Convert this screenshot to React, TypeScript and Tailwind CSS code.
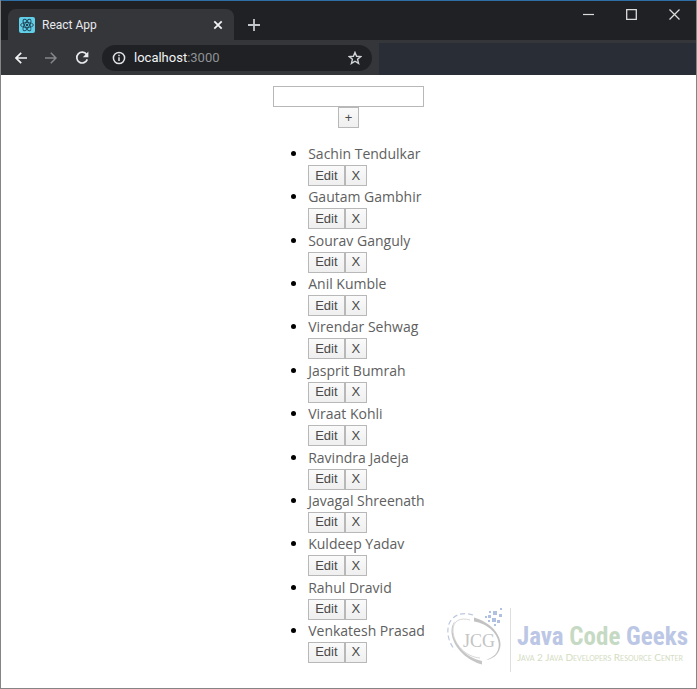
import { useState } from "react";

const initialPlayers = [
  "Sachin Tendulkar",
  "Gautam Gambhir",
  "Sourav Ganguly",
  "Anil Kumble",
  "Virendar Sehwag",
  "Jasprit Bumrah",
  "Viraat Kohli",
  "Ravindra Jadeja",
  "Javagal Shreenath",
  "Kuldeep Yadav",
  "Rahul Dravid",
  "Venkatesh Prasad",
];

const buttonClass =
  "h-[21px] border border-[#b8b8b8] bg-linear-to-b from-[#fafafa] to-[#efefef] px-1.5 font-['Liberation_Sans',sans-serif] text-[13px] leading-4 text-[#4a4a4a]";

const ReactIcon = () => (
  <svg viewBox="0 0 16 16" className="size-4 shrink-0" fill="none">
    <rect width="16" height="16" rx="2" fill="#61cfe8" />
    <g stroke="#20465a" strokeWidth="0.9">
      <ellipse cx="8" cy="8" rx="6.4" ry="2.5" />
      <ellipse cx="8" cy="8" rx="6.4" ry="2.5" transform="rotate(60 8 8)" />
      <ellipse cx="8" cy="8" rx="6.4" ry="2.5" transform="rotate(120 8 8)" />
    </g>
    <circle cx="8" cy="8" r="1.3" fill="#20465a" />
  </svg>
);

const TabStrip = () => (
  <div className="flex h-10 border-t border-[#2f6fa6] bg-[#202124] pl-[7px]">
    <div className="mt-2 flex w-[226px] items-center rounded-t-lg bg-[#35363a] pr-[11px] pl-[11px]">
      <ReactIcon />
      <span className="ml-[7px] flex-1 font-['Roboto',sans-serif] text-xs text-[#e8eaed]">React App</span>
      <button aria-label="Close tab">
        <svg viewBox="0 0 10 10" className="size-[10px]" stroke="#f1f3f4" strokeWidth="1.8">
          <path d="M1.3 1.3l7.4 7.4M8.7 1.3L1.3 8.7" />
        </svg>
      </button>
    </div>
    <button aria-label="New tab" className="mt-2 ml-[14px]">
      <svg viewBox="0 0 12 12" className="size-3" stroke="#c4c7cb" strokeWidth="1.8">
        <path d="M6 0v12M0 6h12" />
      </svg>
    </button>
    <div className="ml-auto flex items-start gap-8 pt-2 pr-4">
      <button aria-label="Minimize">
        <svg viewBox="0 0 11 11" className="size-[11px]" stroke="#dcdcdc" strokeWidth="1.2">
          <path d="M0 5.5h11" />
        </svg>
      </button>
      <button aria-label="Maximize">
        <svg viewBox="0 0 11 11" className="size-[11px]" fill="none" stroke="#dcdcdc" strokeWidth="1.3">
          <path d="M.7 .7h9.6v9.6H.7z" />
        </svg>
      </button>
      <button aria-label="Close">
        <svg viewBox="0 0 11 11" className="size-[11px]" stroke="#dcdcdc" strokeWidth="1.3">
          <path d="M.5 .5l10 10M10.5 .5l-10 10" />
        </svg>
      </button>
    </div>
  </div>
);

const Toolbar = () => (
  <div className="flex h-[35px] items-center bg-[#35363a] pl-[14px]">
    <div className="flex gap-[18px]">
      <button aria-label="Back">
        <svg viewBox="0 0 12 12" className="size-3" fill="none" stroke="#f1f3f4" strokeWidth="1.7">
          <path d="M12 6H1.2M6.2 .8L1 6l5.2 5.2" />
        </svg>
      </button>
      <button aria-label="Forward">
        <svg viewBox="0 0 12 12" className="size-3" fill="none" stroke="#85878b" strokeWidth="1.5">
          <path d="M0 6h10.8M5.8 .8L11 6l-5.2 5.2" />
        </svg>
      </button>
      <button aria-label="Reload">
        <svg viewBox="0 0 14 14" className="size-[14px]" fill="none" stroke="#e8eaed" strokeWidth="1.7">
          <path d="M11.6 3.4A5.4 5.4 0 1 0 12.3 8.4" />
          <path d="M13.4 .6v5.6H7.8z" fill="#e8eaed" stroke="none" />
        </svg>
      </button>
    </div>
    <div className="ml-[13px] flex h-[26px] w-[270px] items-center rounded-full bg-[#202124] px-[10px]">
      <svg viewBox="0 0 14 14" className="size-[14px]" fill="none" stroke="#e0e2e5" strokeWidth="1.5">
        <circle cx="7" cy="7" r="5.6" />
        <path d="M7 6.3v3.8M7 3.8v1.5" />
      </svg>
      <span className="ml-2 flex-1 font-['Roboto',sans-serif] text-[13px] text-[#f1f3f4]">
        localhost<span className="text-[#8f9296]">:3000</span>
      </span>
      <button aria-label="Bookmark this page">
        <svg viewBox="0 0 14 14" className="size-[14px]" fill="none" stroke="#d0d3d7" strokeWidth="1.4">
          <path d="M7 1.4l1.6 3.9 4.2.3-3.2 2.7 1 4.1L7 10.2l-3.6 2.2 1-4.1-3.2-2.7 4.2-.3z" />
        </svg>
      </button>
    </div>
    <div className="mt-[3px] ml-[7px] flex-1 self-stretch bg-[#292d36]" />
  </div>
);

const Watermark = () => (
  <div className="pointer-events-none absolute right-2 bottom-[15px] flex items-center">
    <svg viewBox="0 0 60 66" className="h-[66px] w-[60px]" fill="none">
      <path d="M24 13C14 10 7 14 7 23C7 37 20 50 34 51" stroke="#d2d2d2" strokeWidth="0.9" />
      <path d="M28 10.500C44 15 55 27 54.500 38C54 46 48 52 40 53C48 50 52.500 46 52.800 38C53 28 43 17 28 14.500z" fill="#c2c2c2" />
      <path d="M9 14C2 22 6 36 16 46C22 52 29 55.500 36 57.500L36 54C29 52.500 22 49 17 44C7 34 4 23 9 14z" fill="#c6c6c6" />
      <path d="M27 8C15 4 6 9 3 17C0 26 3 36 9 43" stroke="#bdc8df" strokeWidth="1.2" strokeDasharray="5 3" />
      <text x="17" y="40" fontFamily="Liberation Serif, serif" fontSize="18" fill="#c4c4c4">
        JCG
      </text>
      <g fill="#afc0e0">
        <path d="M47 4h4v4h-4zM53 7h3v3h-3zM42 8h3v3h-3zM46 11h4v4h-4zM51 13h3v3h-3zM48 17h2v2h-2zM54 1h2v2h-2zM43 4h2v2h-2zM39 9h2v2h-2zM42 13h2v2h-2z" />
      </g>
    </svg>
    <div className="ml-1 h-16 w-px bg-[#dedede]" />
    <div className="ml-[6px] pt-1">
      <div className="font-['Roboto_Condensed','Open_Sans_Condensed','Roboto',sans-serif] text-[25px] leading-[30px] font-bold whitespace-nowrap text-[#bcc7e5]">
        Java <span className="text-[#c6dac3]">Code</span> Geeks
      </div>
      <div className="font-['Lato',sans-serif] text-[10px] leading-[10px] whitespace-nowrap text-[#d3dcc2] [font-variant:small-caps]">
        Java 2 Java Developers Resource Center
      </div>
    </div>
  </div>
);

const App = () => {
  const [players, setPlayers] = useState(initialPlayers);
  const [name, setName] = useState("");
  const [editing, setEditing] = useState<number | null>(null);

  const savePlayer = () => {
    if (!name.trim()) return;
    if (editing === null) {
      setPlayers([...players, name]);
    } else {
      setPlayers(players.map((player, i) => (i === editing ? name : player)));
    }
    setName("");
    setEditing(null);
  };

  const editPlayer = (index: number) => {
    setName(players[index]);
    setEditing(index);
  };

  const removePlayer = (index: number) => {
    setPlayers(players.filter((_, i) => i !== index));
    setEditing(null);
  };

  return (
    <div className="relative flex min-h-screen flex-col border-x border-b border-[#858585] bg-white font-['Open_Sans',sans-serif]">
      <header>
        <TabStrip />
        <Toolbar />
      </header>

      <main className="flex flex-1 flex-col items-center pt-[11px] pb-[25px]">
        <input
          type="text"
          aria-label="Player name"
          value={name}
          onChange={(e) => setName(e.target.value)}
          className="h-[21px] w-[151px] border border-[#b8b8b8] px-1 text-[13px]"
        />
        <button className={buttonClass} onClick={savePlayer}>
          +
        </button>

        <ul className="mt-[15px] flex flex-1 list-disc flex-col justify-between pl-9">
          {players.map((player, index) => (
            <li key={index} className="text-sm leading-[22px] marker:text-black">
              <span className="text-[#606060]">{player}</span>
              <div className="flex">
                <button className={buttonClass} onClick={() => editPlayer(index)}>
                  Edit
                </button>
                <button className={buttonClass} onClick={() => removePlayer(index)}>
                  X
                </button>
              </div>
            </li>
          ))}
        </ul>
      </main>

      <Watermark />
    </div>
  );
};

export default App;
